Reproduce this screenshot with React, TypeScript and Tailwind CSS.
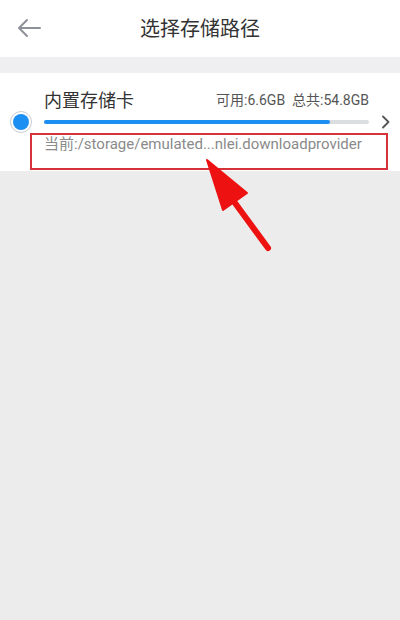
export default function App() {
  return (
    <div
      className="relative min-h-[620px] bg-[#ececec]"
      style={{ fontFamily: 'Roboto, "Noto Sans CJK SC", sans-serif' }}
    >
      {/* header */}
      <div className="relative flex h-[57px] items-center justify-center bg-white">
        <svg className="absolute left-[16px] top-[18px]" width="26" height="20" viewBox="0 0 26 20">
          <path d="M3 10 H24 M11 2 L3 10 L11 18" fill="none" stroke="#8e9199" strokeWidth="2" strokeLinecap="round" strokeLinejoin="round" />
        </svg>
        <span className="text-[20px] text-[#333]">选择存储路径</span>
      </div>

      <div className="h-4 bg-[#efeff1]" />

      {/* storage card */}
      <div className="relative flex h-[98px] items-center bg-white">
        <div className="flex w-[44px] justify-center pr-[2px]">
          <div className="flex h-[22px] w-[22px] items-center justify-center rounded-full border border-[#c9ccd1] bg-white">
            <div className="h-[16px] w-[16px] rounded-full bg-[#1b8ff2]" />
          </div>
        </div>
        <div className="flex h-full w-[325px] flex-col pt-[15px]">
          <div className="flex h-[24px] items-center justify-between">
            <span className="text-[18px] text-[#333]">内置存储卡</span>
            <span className="text-[14px] text-[#555]">可用:6.6GB&nbsp;&nbsp;总共:54.8GB</span>
          </div>
          <div className="mt-[8px] h-[4px] w-full rounded-full bg-[#dcdde0]">
            <div className="h-full w-[88%] rounded-full bg-[#1b8ff2]" />
          </div>
          <div className="mt-[10px] h-[20px] whitespace-nowrap text-[15px] leading-[20px] text-[#8a8a8a]">
            当前:/storage/emulated...nlei.downloadprovider
          </div>
        </div>
        <div className="flex flex-1 justify-end pr-[10px]">
          <svg width="9" height="14" viewBox="0 0 9 14">
            <path d="M2 1.5 L7.5 7 L2 12.5" fill="none" stroke="#555" strokeWidth="1.8" strokeLinecap="round" strokeLinejoin="round" />
          </svg>
        </div>
        {/* annotation box */}
        <div className="absolute left-[30px] top-[60px] h-[37px] w-[358px] border-2 border-[#d6323a]" />
      </div>

      {/* annotation arrow */}
      <svg className="absolute left-[195px] top-[150px]" width="90" height="110" viewBox="0 0 90 110">
        <line x1="40" y1="53" x2="73" y2="98" stroke="#ee1111" strokeWidth="6" strokeLinecap="round" />
        <polygon points="12,10 28,60 52,43" fill="#ee1111" strokeLinejoin="round" stroke="#ee1111" strokeWidth="2" />
      </svg>
    </div>
  );
}
